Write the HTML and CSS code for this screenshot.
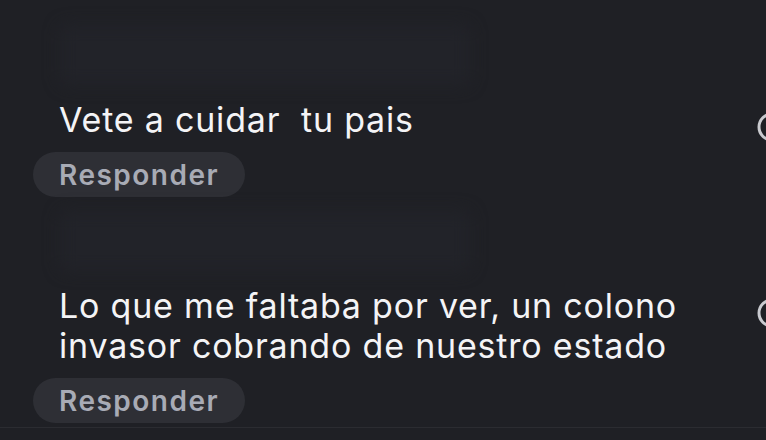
FILE: index.html
```html
<!DOCTYPE html>
<html lang="es">
<head>
  <meta charset="UTF-8">
  <meta name="viewport" content="width=device-width, initial-scale=1.0">
  <title>Comentarios</title>
  <link rel="stylesheet" href="styles.css">
</head>
<body>
  <div class="thread">
    <div class="comment">
      <div class="meta"></div>
      <p class="text">Vete a cuidar  tu pais</p>
      <button class="reply">Responder</button>
      <svg class="like" viewBox="0 0 32 32" width="32" height="32">
        <circle cx="16" cy="16" r="13" fill="none" stroke="#c9cacf" stroke-width="3"/>
      </svg>
    </div>
    <div class="comment">
      <div class="meta"></div>
      <p class="text">Lo que me faltaba por ver, un colono<br>invasor cobrando de nuestro estado</p>
      <button class="reply">Responder</button>
      <svg class="like" viewBox="0 0 32 32" width="32" height="32">
        <circle cx="16" cy="16" r="13" fill="none" stroke="#c9cacf" stroke-width="3"/>
      </svg>
    </div>
  </div>
</body>
</html>
```

FILE: styles.css
```css
body {
  margin: 0;
  height: 100vh;
  overflow: hidden;
  background-color: #1f2025;
  font-family: Inter, "Liberation Sans", sans-serif;
}

.thread {
  padding-top: 25px;
  padding-left: 33px;
  padding-bottom: 4px;
  border-bottom: 1px solid #2b2c31;
}

.comment {
  position: relative;
  margin-bottom: 14px;
}

.comment:last-child {
  margin-bottom: 0;
}

.meta {
  width: 410px;
  height: 60px;
  margin-left: 27px;
  margin-bottom: 15px;
  border-radius: 8px;
  background-color: #222329;
  filter: blur(8px);
}

.text {
  margin: 0 0 12px;
  padding-left: 26px;
  color: #f4f4f6;
  font-size: 34px;
  letter-spacing: 0.8px;
  line-height: 40px;
  white-space: pre-wrap;
}

.reply {
  display: block;
  width: 212px;
  height: 45px;
  padding: 0 0 0 26px;
  text-align: left;
  border: none;
  border-radius: 23px;
  background-color: #2e2f35;
  color: #a8abb5;
  font-family: inherit;
  font-size: 28px;
  font-weight: 600;
  letter-spacing: 1.5px;
}

.like {
  position: absolute;
  top: 86px;
  left: 723px;
}
```
